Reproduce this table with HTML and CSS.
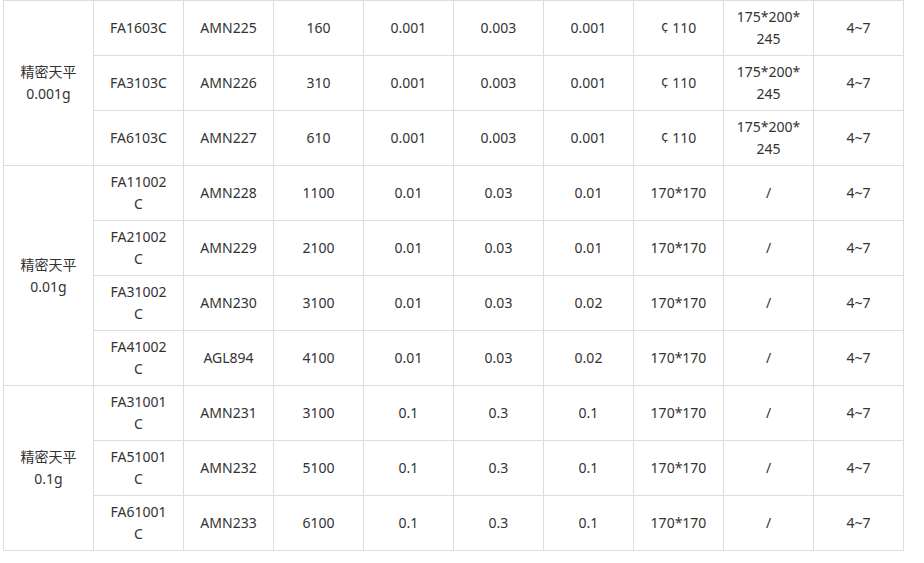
FILE: index.html
```html
<!DOCTYPE html>
<html lang="zh-CN">
<head>
<meta charset="utf-8">
<title>精密天平</title>
<link rel="stylesheet" href="styles.css">
</head>
<body>
<table class="spec">
<tbody>
<tr><td rowspan="3">精密天平<br>0.001g</td><td>FA1603C</td><td>AMN225</td><td>160</td><td>0.001</td><td>0.003</td><td>0.001</td><td>¢ 110</td><td>175*200*245</td><td>4~7</td></tr>
<tr><td>FA3103C</td><td>AMN226</td><td>310</td><td>0.001</td><td>0.003</td><td>0.001</td><td>¢ 110</td><td>175*200*245</td><td>4~7</td></tr>
<tr><td>FA6103C</td><td>AMN227</td><td>610</td><td>0.001</td><td>0.003</td><td>0.001</td><td>¢ 110</td><td>175*200*245</td><td>4~7</td></tr>
<tr><td rowspan="4">精密天平<br>0.01g</td><td>FA11002C</td><td>AMN228</td><td>1100</td><td>0.01</td><td>0.03</td><td>0.01</td><td>170*170</td><td>/</td><td>4~7</td></tr>
<tr><td>FA21002C</td><td>AMN229</td><td>2100</td><td>0.01</td><td>0.03</td><td>0.01</td><td>170*170</td><td>/</td><td>4~7</td></tr>
<tr><td>FA31002C</td><td>AMN230</td><td>3100</td><td>0.01</td><td>0.03</td><td>0.02</td><td>170*170</td><td>/</td><td>4~7</td></tr>
<tr><td>FA41002C</td><td>AGL894</td><td>4100</td><td>0.01</td><td>0.03</td><td>0.02</td><td>170*170</td><td>/</td><td>4~7</td></tr>
<tr><td rowspan="3">精密天平<br>0.1g</td><td>FA31001C</td><td>AMN231</td><td>3100</td><td>0.1</td><td>0.3</td><td>0.1</td><td>170*170</td><td>/</td><td>4~7</td></tr>
<tr><td>FA51001C</td><td>AMN232</td><td>5100</td><td>0.1</td><td>0.3</td><td>0.1</td><td>170*170</td><td>/</td><td>4~7</td></tr>
<tr><td>FA61001C</td><td>AMN233</td><td>6100</td><td>0.1</td><td>0.3</td><td>0.1</td><td>170*170</td><td>/</td><td>4~7</td></tr>
</tbody>
</table>
</body>
</html>
```
FILE: styles.css
```css
html, body {
  margin: 0;
  padding: 0;
  background: #fff;
}
body {
  font-family: "Noto Sans", "Noto Sans CJK SC", sans-serif;
  font-size: 14px;
  line-height: 22px;
  color: #333;
}
.spec {
  border-collapse: collapse;
  table-layout: fixed;
  width: 901px;
  margin: 0 0 0 3px;
}
.spec td {
  border: 1px solid #ddd;
  width: 90px;
  height: 54px;
  padding: 0 12.5px;
  box-sizing: border-box;
  text-align: center;
  vertical-align: middle;
  word-break: break-all;
  overflow-wrap: anywhere;
}
.spec tr {
  height: 55px;
}
```
